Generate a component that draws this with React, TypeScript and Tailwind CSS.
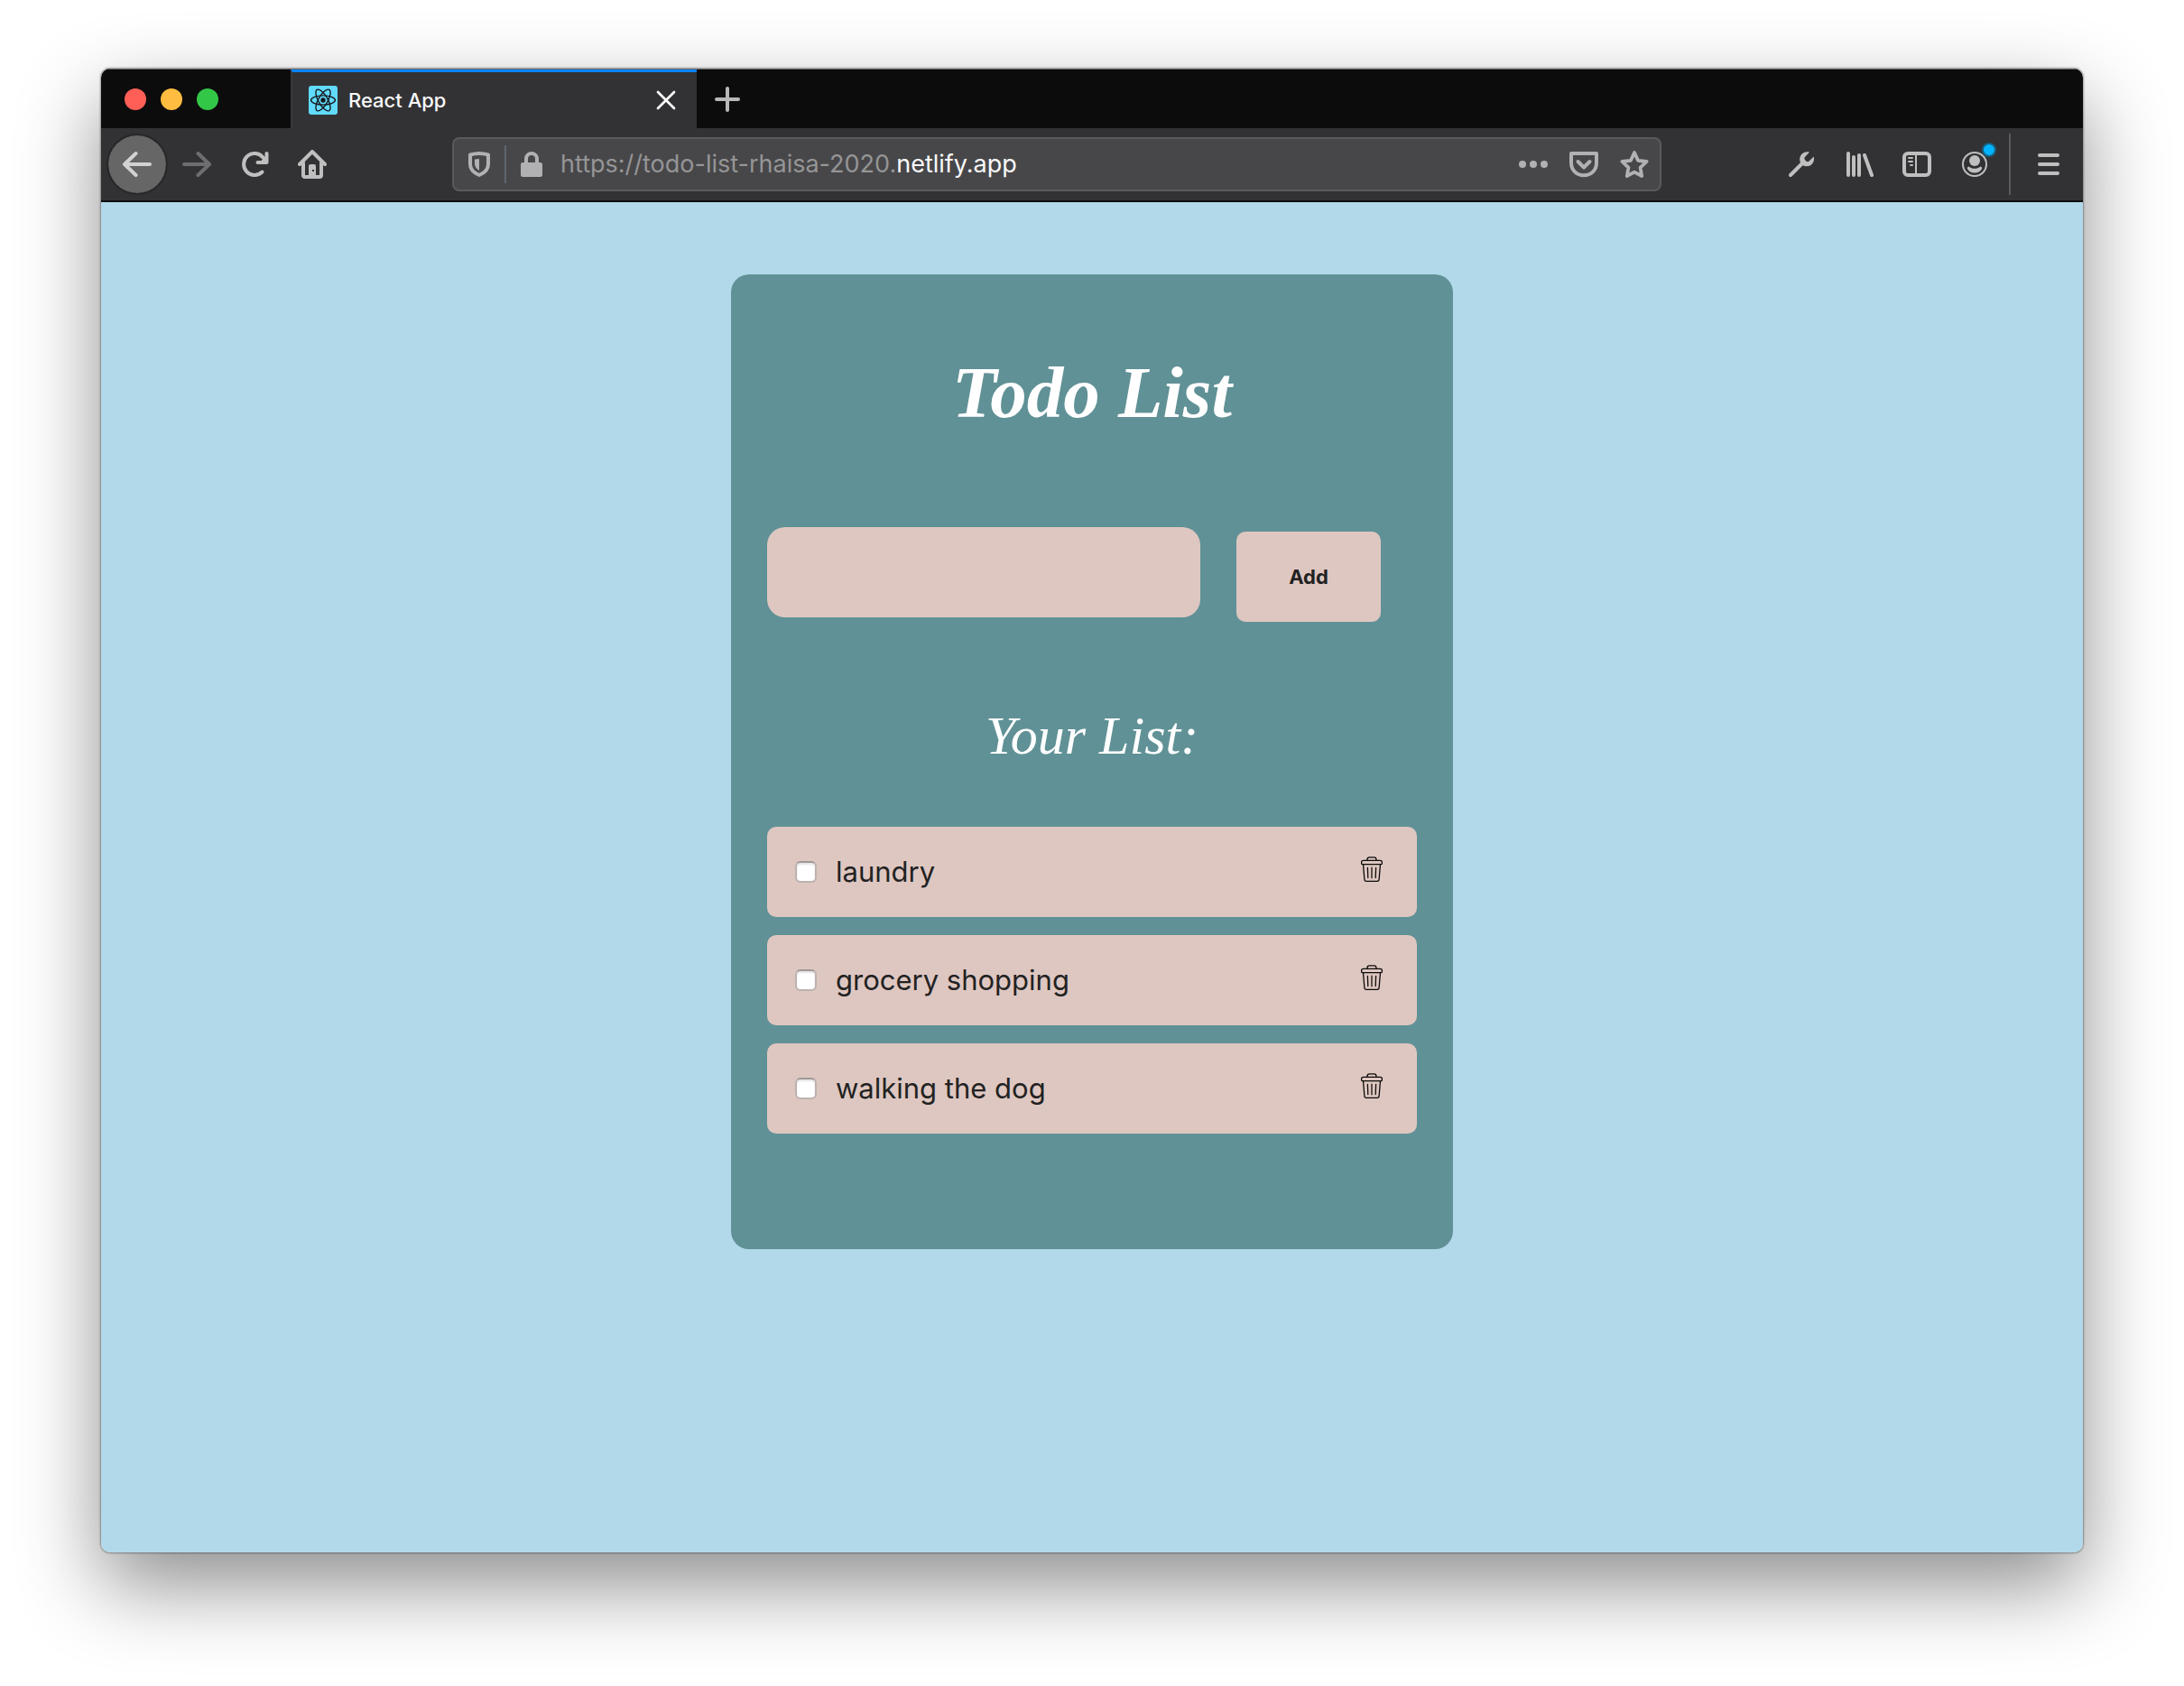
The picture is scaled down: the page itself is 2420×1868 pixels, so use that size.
import { useState } from "react";
import type { ReactNode } from "react";

function Icon({ children, className = "size-8" }: { children: ReactNode; className?: string }) {
  return (
    <svg
      viewBox="0 0 32 32"
      className={className}
      fill="none"
      stroke="currentColor"
      strokeWidth="4"
      strokeLinecap="round"
      strokeLinejoin="round"
      aria-hidden="true"
    >
      {children}
    </svg>
  );
}

function ReactLogo() {
  return (
    <svg viewBox="0 0 32 32" className="size-8 shrink-0" fill="none" aria-hidden="true">
      <rect width="32" height="32" rx="3" fill="#61dafb" />
      <g stroke="#16181d" strokeWidth="1.4">
        <ellipse cx="16" cy="16" rx="13.4" ry="5.1" />
        <ellipse cx="16" cy="16" rx="13.4" ry="5.1" transform="rotate(60 16 16)" />
        <ellipse cx="16" cy="16" rx="13.4" ry="5.1" transform="rotate(120 16 16)" />
      </g>
      <circle cx="16" cy="16" r="2.7" fill="#16181d" />
    </svg>
  );
}

function TrashIcon() {
  return (
    <svg
      viewBox="0 0 24 28"
      className="h-7 w-6"
      fill="none"
      stroke="#0c0a0a"
      strokeWidth="1.3"
      strokeLinecap="round"
      strokeLinejoin="round"
      aria-hidden="true"
    >
      <path d="M7 4.2V3.4C7 1.6 7.8.8 9.4.8h5.2C16.200.8 17 1.600 17 3.400v.8" />
      <path d="M2.600 4.300h18.800c1.300 0 2 .7 2 1.900v1.200c0 .8-.5 1.200-1.300 1.200H1.900C1.100 8.600.6 8.200.6 7.400V6.200c0-1.200.7-1.900 2-1.900z" />
      <path d="M2.500 8.800l1.400 16.400c.1 1.400.8 2.100 2.100 2.100h12c1.300 0 2-.7 2.100-2.100l1.400-16.400" />
      <path d="M7.400 12.500l.4 11M16.600 12.500l-.4 11" />
      <path d="M12 12.500v11" strokeWidth="1.800" opacity=".7" />
    </svg>
  );
}

function TabStrip() {
  return (
    <div className="flex h-[66px] border-t border-[#6b6b6c] bg-[#0c0c0d]">
      <div className="flex w-[210px] items-center gap-4 pl-[26px]">
        <button aria-label="Close window" className="size-6 rounded-full bg-[#ff5f57]" />
        <button aria-label="Minimize window" className="size-6 rounded-full bg-[#febc40]" />
        <button aria-label="Zoom window" className="size-6 rounded-full bg-[#33c748]" />
      </div>
      <div className="flex w-[450px] items-center border-t-3 border-l-2 border-t-[#0a84ff] border-l-[#38383a] bg-[#323234] pr-[22px] pl-[18px]">
        <ReactLogo />
        <span className="ml-3 flex-1 text-[22px] font-medium text-[#f9f9fa]">React App</span>
        <button aria-label="Close tab" className="text-white">
          <Icon className="size-6">
            <path d="M4 4l24 24M28 4L4 28" strokeWidth="3.6" />
          </Icon>
        </button>
      </div>
      <button aria-label="New tab" className="ml-[18px] text-[#b8b8b9]">
        <Icon>
          <path d="M4 16h24M16 4v24" />
        </Icon>
      </button>
    </div>
  );
}

function AddressBar() {
  return (
    <div className="mx-[139px] flex h-[60px] min-w-0 flex-1 items-center rounded-lg border-2 border-[#5a5a5c] bg-[#474749] px-3 text-[#b1b1b3]">
      <button aria-label="Tracking protection">
        <Icon>
          <path d="M16 4c3 0 6.500.5 10 1.500V16c0 5-4 9.500-10 12C10 25.500 6 21 6 16V5.500C9.500 4.500 13 4 16 4z" />
          <path d="M16 10v13c-3-2-5-4.500-5-7.500v-5z" fill="currentColor" stroke="none" />
        </Icon>
      </button>
      <span className="ml-3 h-[42px] w-0.5 bg-[#5f6571]" />
      <button aria-label="Site security" className="ml-3">
        <Icon>
          <path d="M10 14v-4a6 6 0 0 1 12 0v4" />
          <rect x="4" y="14" width="24" height="16" rx="2.500" fill="currentColor" stroke="none" />
        </Icon>
      </button>
      <a href="https://todo-list-rhaisa-2020.netlify.app" className="ml-4 flex-1 truncate text-[27px] text-[#959596]">
        https://todo-list-rhaisa-2020.<span className="text-[#f9f9fa]">netlify.app</span>
      </a>
      <div className="flex items-center gap-6">
        <button aria-label="Page actions">
          <Icon>
            <g fill="currentColor" stroke="none">
              <circle cx="4" cy="16" r="4" />
              <circle cx="16" cy="16" r="4" />
              <circle cx="28" cy="16" r="4" />
            </g>
          </Icon>
        </button>
        <button aria-label="Save to Pocket">
          <Icon>
            <path d="M2 4h28v10.500C30 22.500 24 28.200 16 28.200S2 22.500 2 14.500z" />
            <path d="M9.500 13l6.500 6.500 6.500-6.500" />
          </Icon>
        </button>
        <button aria-label="Bookmark this page">
          <Icon>
            <path
              d="M16 3l4 8.800 9.600 1.200-7 6.700 1.600 9.300L16 24.600 7.800 29l1.600-9.300-7-6.700 9.600-1.200z"
              strokeWidth="3.800"
            />
          </Icon>
        </button>
      </div>
    </div>
  );
}

function Toolbar() {
  return (
    <div className="flex h-[82px] items-center border-b-2 border-[#0c0c0d] bg-[#323234] pr-[22px] pl-2 text-[#bfbfc0]">
      <button
        aria-label="Back"
        className="flex size-16 items-center justify-center rounded-full bg-[#666667] text-[#d2d2d3] outline-2 outline-[#28282a]"
      >
        <Icon>
          <path d="M2 16h28M14.500 4L2 16l12.500 12" />
        </Icon>
      </button>
      <div className="ml-[18px] flex gap-8">
        <button aria-label="Forward" className="text-[#6e6e70]">
          <Icon>
            <path d="M2 16h28M17.500 4L30 16 17.500 28" />
          </Icon>
        </button>
        <button aria-label="Reload">
          <Icon>
            <path d="M24.500 24.500A12 12 0 1 1 25.500 8.500L28.500 12" />
            <path d="M29.500 4v10h-10" />
            <path d="M23.500 12.500l5.500-5.500v6z" fill="currentColor" strokeWidth="1" />
          </Icon>
        </button>
        <button aria-label="Home">
          <Icon>
            <path d="M2 16L16 2l14 14" />
            <path d="M6 14.500V28a2 2 0 0 0 2 2h16a2 2 0 0 0 2-2V14.500" />
            <path
              d="M12 30V18a2 2 0 0 1 2-2h4a2 2 0 0 1 2 2v12zM16 22v2h2v-2z"
              fill="currentColor"
              fillRule="evenodd"
              stroke="none"
            />
          </Icon>
        </button>
      </div>
      <AddressBar />
      <div className="flex items-center gap-8">
        <button aria-label="Developer tools">
          <Icon>
            <path d="M4 28l13-13" />
            <path
              d="M25 2.500C18.500.8 13.500 5.800 14.300 11.500c.5 4.500 4.500 7.500 9.200 6.600 4.500-.8 7.500-5 6.300-10.600L24 13c-2 .8-5-1.500-4.500-4.500z"
              fill="currentColor"
              stroke="none"
            />
          </Icon>
        </button>
        <button aria-label="Library">
          <Icon>
            <path d="M4 4v24M10 8v20M16 6v22M22 6l8 22" />
          </Icon>
        </button>
        <button aria-label="Sidebars">
          <Icon>
            <rect x="2" y="4" width="28" height="24" rx="4" />
            <path d="M15 4v24" strokeWidth="2" />
            <path d="M7 9h4M7 13h4M9 17h2" strokeWidth="2" />
          </Icon>
        </button>
        <button aria-label="Account" className="relative">
          <Icon>
            <circle cx="16" cy="16" r="13" strokeWidth="2" />
            <circle cx="16" cy="12" r="6" fill="currentColor" stroke="none" />
            <path
              d="M9.500 18.500c2 1.500 4 2.300 6.500 2.300s4.500-.8 6.500-2.300c1.500.3 2 1.500 1.500 2.500-1.500 3-4.500 4.500-8 4.500s-6.500-1.500-8-4.500c-.5-1 0-2.200 1.500-2.500z"
              fill="currentColor"
              stroke="none"
            />
          </Icon>
          <span className="absolute -top-2 -right-2 size-4 rounded-full border-2 border-[#1b5e7c] bg-[#00b3ff]" />
        </button>
      </div>
      <span className="ml-[22px] h-[68px] w-0.5 bg-[#5a5a5c]" />
      <button aria-label="Open menu" className="ml-[26px]">
        <Icon>
          <path d="M6 6h20M6 16h20M6 26h20" />
        </Icon>
      </button>
    </div>
  );
}

function TodoItem({ text, onDelete }: { text: string; onDelete: () => void }) {
  return (
    <li className="flex h-[100px] items-center rounded-[10px] bg-[#dec7c1] pr-[38px] pl-[31px]">
      <label className="flex flex-1 items-center gap-[21px] text-[31px] text-[#222]">
        <input
          type="checkbox"
          className="size-6 appearance-none rounded-md border-2 border-[#bcb2b0] border-t-[#a09896] bg-white shadow-[inset_0_2px_2px_#e4e4e4] checked:bg-[#0a84ff]"
        />
        {text}
      </label>
      <button aria-label={`Delete ${text}`} className="mb-1.5" onClick={onDelete}>
        <TrashIcon />
      </button>
    </li>
  );
}

function TodoApp() {
  const [draft, setDraft] = useState("");
  const [items, setItems] = useState(["laundry", "grocery shopping", "walking the dog"]);

  return (
    <main className="flex-1 bg-[#b2d9ea] px-10 py-20">
      <section className="mx-auto max-w-[800px] rounded-[20px] bg-[#609196] px-10 pt-[86px] pb-32">
        <h1 className="text-center font-['Liberation_Serif',serif] text-[81px] leading-[90px] font-bold text-white italic">
          Todo List
        </h1>
        <form
          className="mt-[104px] flex items-start gap-10"
          onSubmit={(event) => {
            event.preventDefault();
            if (draft.trim()) {
              setItems([...items, draft.trim()]);
              setDraft("");
            }
          }}
        >
          <input
            type="text"
            aria-label="New todo"
            value={draft}
            onChange={(event) => setDraft(event.target.value)}
            className="h-[100px] w-[480px] min-w-0 rounded-[20px] bg-[#dec7c1] px-6 text-[31px] text-[#222]"
          />
          <button type="submit" className="mt-[5px] h-[100px] w-40 rounded-[10px] bg-[#dec7c1] text-[22px] font-bold text-[#222]">
            Add
          </button>
        </form>
        <h2 className="mt-[92px] text-center font-['Liberation_Serif',serif] text-[60px] leading-[68px] text-white italic">
          Your List:
        </h2>
        <ul className="mt-[67px] flex flex-col gap-5">
          {items.map((item, index) => (
            <TodoItem key={item + index} text={item} onDelete={() => setItems(items.filter((_, i) => i !== index))} />
          ))}
        </ul>
      </section>
    </main>
  );
}

export default function App() {
  return (
    <div className="flex min-h-screen flex-col bg-white px-28 pt-[76px] pb-[148px] font-[Inter,sans-serif]">
      <div className="flex flex-1 flex-col rounded-[10px] shadow-[0_0_2px_1px_rgba(0,0,0,0.35),0_36px_90px_rgba(0,0,0,0.45)]">
        <div className="flex flex-1 flex-col overflow-hidden rounded-[10px]">
          <TabStrip />
          <Toolbar />
          <TodoApp />
        </div>
      </div>
    </div>
  );
}
